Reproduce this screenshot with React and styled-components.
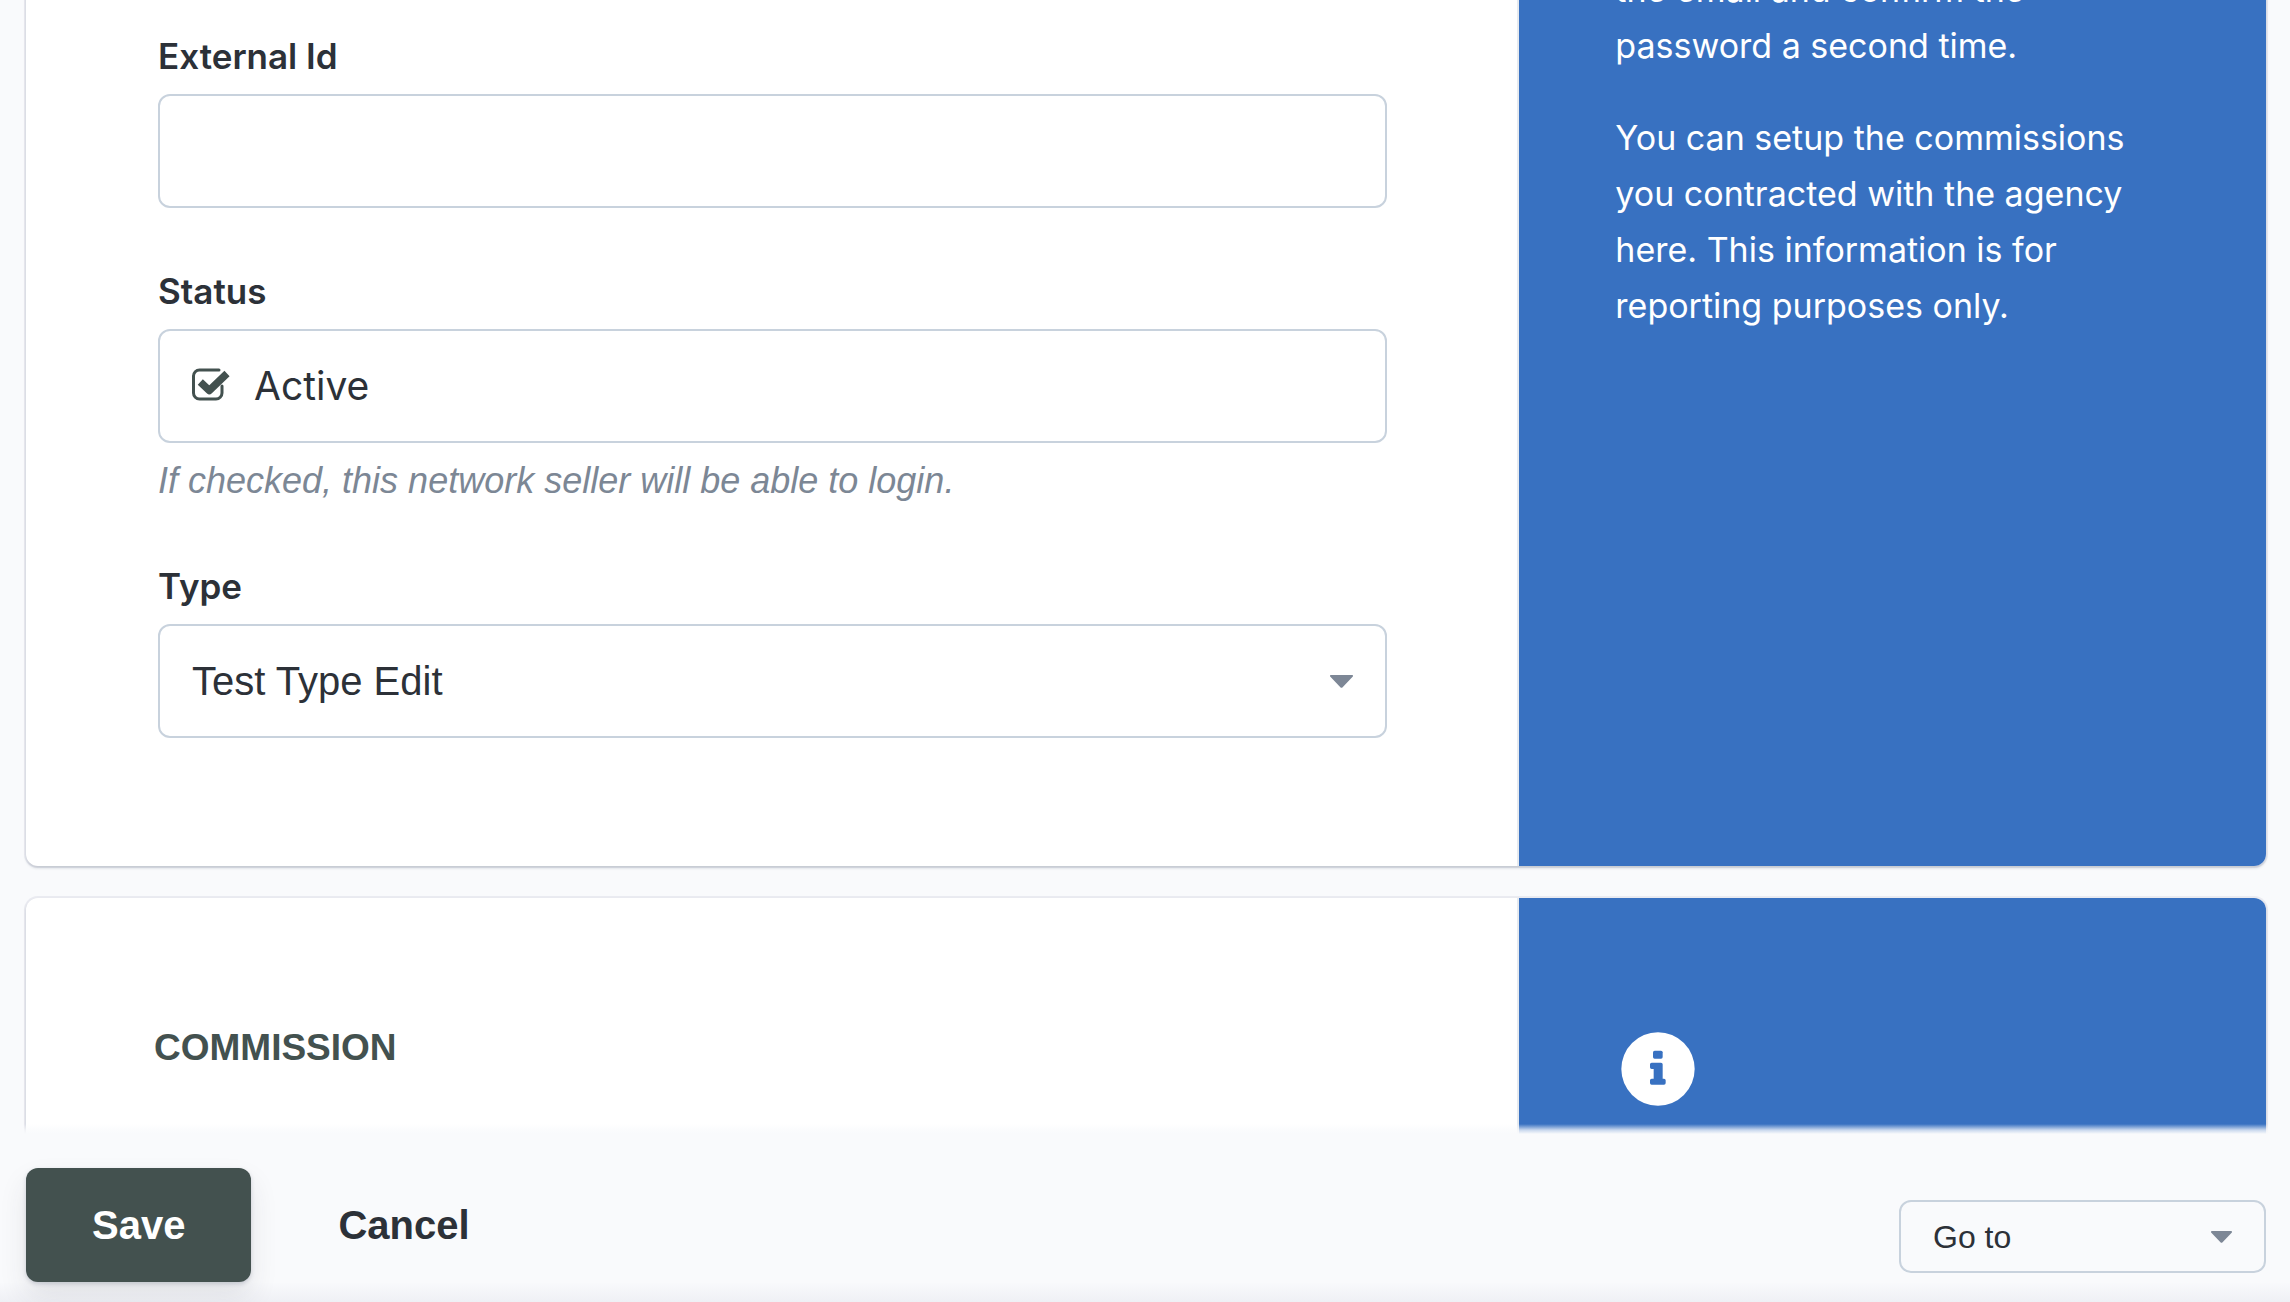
import React, { useState } from 'react'
import styled, { createGlobalStyle } from "styled-components"

const GlobalStyle=createGlobalStyle`
    *{
        box-sizing:border-box;
    }
    body{
        margin:0;
        background-color:#f9fafc;
        color:#2c3138;
        font-family:Inter, sans-serif;
    }
`;

const Page=styled.div`
    height:100vh;
    display:flex;
    flex-direction:column;
    overflow:hidden;
`;
/* the form is scrolled part of the way down */
const Content=styled.main`
    flex:1;
    min-height:0;
    display:flex;
    flex-direction:column;
    gap:32px;
    margin-top:-40px;
    padding:0px 24px 0px 26px;
`;
const Card=styled.section`
    flex-shrink:0;
    display:grid;
    grid-template-columns:2fr 1fr;
    border-radius:12px;
    background-color:white;
    box-shadow:0px 0px 0px 2px rgba(60,70,120,0.08), 0px 2px 3px rgba(40,60,80,0.2);
`;
const FormPanel=styled.div`
    padding:${props=>props.$first?"68px 130px 128px 132px":"129px 128px 200px"};
    border-right:2px solid #e6eaef;
    display:flex;
    flex-direction:column;
    gap:55px;
`;
const InfoPanel=styled.aside`
    padding:${props=>props.$first?"2px 96px":"134px 102px"};
    background-color:#3871c1;
    color:white;
    border-radius:0px 12px 12px 0px;
`;
const InfoText=styled.p`
    margin:0px 0px 36px;
    font-size:34px;
    line-height:56px;
`;
const SectionTitle=styled.h2`
    margin:0;
    font-family:"Liberation Sans", Arial, sans-serif;
    font-size:37px;
    line-height:42px;
    font-weight:700;
    color:#43514f;
    text-transform:uppercase;
`;

const Field=styled.div`
    display:flex;
    flex-direction:column;
`;
const Label=styled.label`
    margin-bottom:10px;
    font-size:35px;
    line-height:56px;
    font-weight:600;
`;
const Input=styled.input`
    width:100%;
    height:114px;
    padding:0px 32px;
    border:2px solid #c8d2dd;
    border-radius:12px;
    background-color:white;
    color:inherit;
    font-family:"Liberation Sans", Arial, sans-serif;
    font-size:40px;
`;
const CheckRow=styled.div`
    height:114px;
    padding:0px 31px;
    display:flex;
    align-items:center;
    gap:23px;
    border:2px solid #c8d2dd;
    border-radius:12px;
`;
const CheckLabel=styled.label`
    font-size:39px;
    line-height:56px;
`;
const CheckBox=styled.span`
    display:grid;
    width:40px;
    height:36px;

    > *{
        grid-area:1 / 1;
    }
    > svg{
        pointer-events:none;
    }
`;
const Check=styled.input`
    appearance:none;
    width:40px;
    height:36px;
    margin:0;
    cursor:pointer;
`;
const Help=styled.p`
    margin:16px 0px 0px;
    font-family:"Liberation Sans", Arial, sans-serif;
    font-size:36px;
    line-height:44px;
    font-style:italic;
    color:#7c8795;
`;

const SelectWrap=styled.div`
    display:grid;
    align-items:center;
    width:${props=>props.$small?"367px":"100%"};

    > *{
        grid-area:1 / 1;
    }
    > svg{
        justify-self:end;
        margin-right:34px;
        pointer-events:none;
    }
`;
const Select=styled.select`
    appearance:none;
    width:100%;
    height:${props=>props.$small?"73px":"114px"};
    padding:0px 32px;
    border:2px solid #c8d2dd;
    border-radius:12px;
    background-color:transparent;
    color:inherit;
    font-family:"Liberation Sans", Arial, sans-serif;
    font-size:${props=>props.$small?"32px":"40px"};
`;

/* the top edge fades out over the cards below it */
const Footer=styled.footer`
    position:relative;
    display:flex;
    align-items:flex-start;
    justify-content:space-between;
    padding:44px 24px 20px 26px;
    background:
        linear-gradient(to top, rgba(100,110,150,0.07), transparent 20px),
        linear-gradient(rgba(249,250,252,0), rgba(249,250,252,0.75) 6px, #f9fafc 10px);
`;
const Actions=styled.div`
    display:flex;
    gap:21px;
`;
const Button=styled.button`
    height:114px;
    padding:0px 66px;
    border:none;
    border-radius:12px;
    font-family:"Liberation Sans", Arial, sans-serif;
    font-size:40px;
    font-weight:700;
    cursor:pointer;
    background-color:${props=>props.$filled?"#43514f":"transparent"};
    color:${props=>props.$filled?"white":"inherit"};
    box-shadow:${props=>props.$filled?"0px 2px 4px rgba(50,60,90,0.2), 0px 14px 28px rgba(50,50,60,0.1)":"none"};
`;
const GoTo=styled.div`
    padding-top:32px;
`;

const CheckIcon = ({checked}) => (
    <svg width="40" height="36" viewBox="0 0 40 36" fill="none" stroke="#43514f" aria-hidden="true">
        <path d="M28 2H8.5a6 6 0 0 0-6 6v17a6 6 0 0 0 6 6H25a6 6 0 0 0 6-6v-7" strokeWidth="3" strokeLinecap="round"/>
        {checked && <path d="M9.3 14l9 8.5L36 5.5" strokeWidth="7.4" strokeLinejoin="round"/>}
    </svg>
)

const ArrowIcon = ({width}) => (
    <svg width={width} height={width===23?13:12} viewBox="0 0 23 13" aria-hidden="true">
        <path d="M1.2 0h20.6a1 1 0 0 1 .8 1.8L12.4 12.4a1.3 1.3 0 0 1-1.8 0L.4 1.8A1 1 0 0 1 1.2 0z" fill="#7d8796"/>
    </svg>
)

const InfoIcon = () => (
    <svg width="74" height="74" viewBox="0 0 222 222" aria-hidden="true">
        <circle cx="111" cy="111" r="110" fill="white"/>
        <g fill="#3871c1">
            <rect x="96" y="56" width="29" height="24" rx="5"/>
            <path d="M92 92h28q5 0 5 5v43h4q5 0 5 5v8q0 5-5 5H92q-5 0-5-5v-8q0-5 5-5h6v-29h-6q-5 0-5-5v-9q0-5 5-5z"/>
        </g>
    </svg>
)

const App = () => {
    const [externalId,setExternalId]=useState("");
    const [active,setActive]=useState(true);

  return (
    <Page>
      <GlobalStyle/>
      <Content>
        <Card>
            <FormPanel $first>
                <Field>
                    <Label htmlFor="externalId">External Id</Label>
                    <Input id="externalId" type="text" value={externalId} onChange={(e)=>setExternalId(e.target.value)}/>
                </Field>
                <Field>
                    <Label as="span" id="statusLabel">Status</Label>
                    <CheckRow role="group" aria-labelledby="statusLabel">
                        <CheckBox>
                            <Check id="active" type="checkbox" checked={active} onChange={(e)=>setActive(e.target.checked)}/>
                            <CheckIcon checked={active}/>
                        </CheckBox>
                        <CheckLabel htmlFor="active">Active</CheckLabel>
                    </CheckRow>
                    <Help>If checked, this network seller will be able to login.</Help>
                </Field>
                <Field>
                    <Label htmlFor="type">Type</Label>
                    <SelectWrap>
                        <Select id="type">
                            <option>Test Type Edit</option>
                        </Select>
                        <ArrowIcon width={23}/>
                    </SelectWrap>
                </Field>
            </FormPanel>
            <InfoPanel $first>
                <InfoText>the email and confirm the<br/>password a second time.</InfoText>
                <InfoText>You can setup the commissions you contracted with the agency here. This information is for reporting purposes only.</InfoText>
            </InfoPanel>
        </Card>
        <Card>
            <FormPanel>
                <SectionTitle>Commission</SectionTitle>
            </FormPanel>
            <InfoPanel>
                <InfoIcon/>
            </InfoPanel>
        </Card>
      </Content>
      <Footer>
        <Actions>
            <Button type="submit" $filled>Save</Button>
            <Button type="button">Cancel</Button>
        </Actions>
        <GoTo>
            <SelectWrap $small>
                <Select $small aria-label="Go to">
                    <option>Go to</option>
                </Select>
                <ArrowIcon width={21}/>
            </SelectWrap>
        </GoTo>
      </Footer>
    </Page>
  )
}

export default App
